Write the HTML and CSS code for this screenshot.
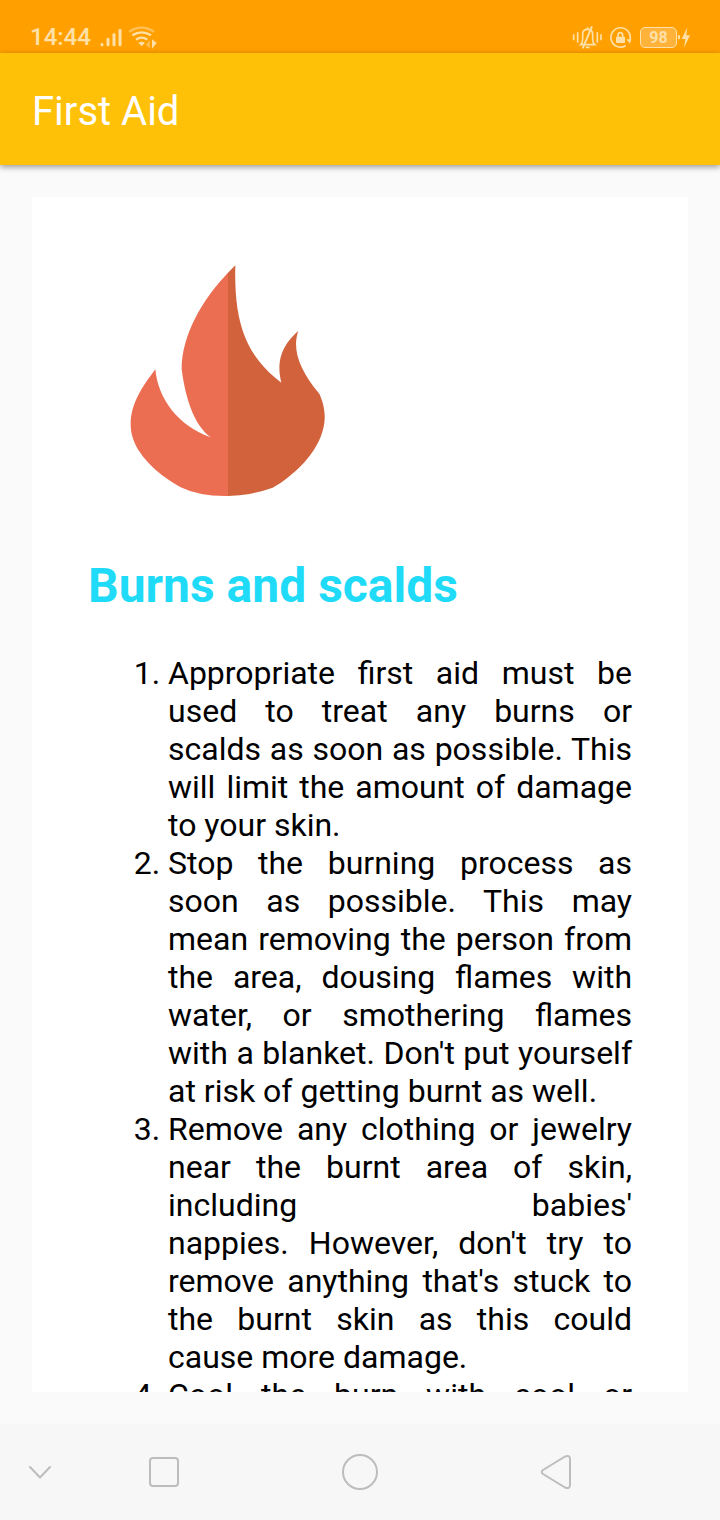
FILE: index.html
```html
<!DOCTYPE html>
<html lang="en">
<head>
<meta charset="utf-8">
<meta name="viewport" content="width=device-width, initial-scale=1">
<title>First Aid</title>
<link rel="stylesheet" href="styles.css">
</head>
<body>
<div class="status">
  <div class="status-group">
    <time class="clock">14:44</time>
    <svg class="signal" viewBox="240 36 66 56" aria-hidden="true">
      <g stroke="#ffe0a8" stroke-width="9" stroke-linecap="round"><path d="M246 85v1M264 69v17M282 55v31M300 42v44"/></g>
    </svg>
    <svg class="wifi" viewBox="324 24 87 72" aria-hidden="true">
      <g fill="none" stroke="#ffe0a8" stroke-width="7">
        <path d="M328 44q36-24 74 0" stroke="#ffc05a"/>
        <path d="M337 55q28-18 56 0M348 68q17-12 34 0"/>
      </g>
      <path d="M355 77q10-5 20 0l-10 11z" fill="#ffe0a8"/>
      <path d="M389 70v24l-11-11z" fill="#ffc05a"/>
      <path d="M396 67v28l14-17z" fill="#ffe0a8"/>
    </svg>
  </div>
  <div class="status-group">
    <svg class="bell" viewBox="39 24 93 75" aria-hidden="true">
      <g fill="none" stroke="#ffe0a8" stroke-width="5">
        <path d="M44 52v18M56 46v31M115 46v31M126 52v18M65 83q6-5 6-17V52q0-15 15-15t15 15v14q0 12 6 17z"/>
        <path d="M71 94L99 28" stroke-width="6"/>
        <path d="M80 91h12M86 37v-6"/>
      </g>
    </svg>
    <svg class="lock" viewBox="147 27 75 69" aria-hidden="true">
      <path d="M210 68A29 29 0 1 0 197 86" fill="none" stroke="#ffe0a8" stroke-width="5"/>
      <path d="M199 67h15l-4 13z" fill="#ffe0a8"/>
      <rect x="168" y="59" width="27" height="19" rx="2" fill="#ffe0a8"/>
      <path d="M174 60v-5q0-8 7-8t7 8v5" fill="none" stroke="#ffe0a8" stroke-width="5"/>
    </svg>
    <div class="power">
      <span class="battery">98</span>
      <svg class="bolt" viewBox="351 27 42 69" aria-hidden="true">
        <path d="M354 54h3q3 0 3 3v7q0 3-3 3h-3zM382 31l-17 35h11l-4 26 18-37h-11z" fill="#ffe0a8"/>
      </svg>
    </div>
  </div>
</div>
<header class="appbar"><h1 class="title">First Aid</h1></header>
<main class="page">
  <article class="card">
    <svg class="flame" viewBox="-66 -9 840 840" role="img" aria-label="Flame">
      <path fill="#ec6e52" d="M354 68V738H345Q265 738 212 712C120 660 62 592 62 524C62 460 98 409 136 358C144 447 205 528 302 562C253 526 226 446 215 357C215 256 276 149 354 68z"/>
      <path fill="#d1623c" d="M354 68L376 46C372 212 403 314 514 398C497 330 518 284 565 242C545 300 570 362 628 431C641 459 645 486 644 507C640 587 571 665 488 713Q425 736 354 738z"/>
    </svg>
    <h2 class="heading">Burns and scalds</h2>
    <ol class="steps">
      <li>Appropriate first aid must be used to treat any burns or scalds as soon as possible. This will limit the amount of damage to your skin.</li>
      <li>Stop the burning process as soon as possible. This may mean removing the person from the area, dousing flames with water, or smothering flames with a blanket. Don't put yourself at risk of getting burnt as well.</li>
      <li>Remove any clothing or jewelry near the burnt area of skin, including babies' nappies.&nbsp;However, don't try to remove anything that's stuck to the burnt skin as this could cause more damage.</li>
      <li class="step-open">Cool the burn with cool or</li>
    </ol>
  </article>
</main>
<nav class="navbar" aria-label="System">
  <button class="nav-hide" aria-label="Hide"><svg width="24" height="16" viewBox="0 0 24 16"><path d="M2 3l10 10.500L22 3"/></svg></button>
  <button class="nav-main" aria-label="Recent apps"><svg width="32" height="32" viewBox="0 0 32 32"><rect x="2" y="2" width="28" height="28" rx="3"/></svg></button>
  <button class="nav-main" aria-label="Home"><svg width="38" height="38" viewBox="0 0 38 38"><circle cx="19" cy="19" r="17"/></svg></button>
  <button class="nav-main" aria-label="Back"><svg width="32" height="38" viewBox="0 0 32 38"><path d="M3 17L25 3.500Q30 1.500 30 6V32Q30 36.500 25 34.500L3 21Q.5 19 3 17z"/></svg></button>
</nav>
</body>
</html>
```
FILE: styles.css
```css
* { box-sizing: border-box; }

body {
  margin: 0;
  height: 100vh;
  display: flex;
  flex-direction: column;
  background: #fafafa;
  font-family: Roboto, "Liberation Sans", sans-serif;
}

.status {
  flex: none;
  display: flex;
  justify-content: space-between;
  align-items: center;
  padding: 21px 29px 0 30px;
  height: 53px;
  background: #ffa000;
  color: #ffe0a8;
}

.status-group { display: flex; align-items: center; gap: 6px; }
.clock { padding: 1px 3px 0 0; font-size: 24px; line-height: 31px; font-weight: 500; }
.signal { width: 22px; height: 19px; }
.wifi { width: 29px; height: 24px; }
.bell { width: 31px; height: 25px; }
.lock { width: 25px; height: 23px; }
.power { display: flex; align-items: center; }

.battery {
  width: 37px;
  border: 1px solid #ffe0a8;
  border-radius: 5px;
  background: #ffb33a;
  font-size: 16px;
  line-height: 19px;
  font-weight: 700;
  text-align: center;
}

.bolt { width: 14px; height: 23px; }

.appbar {
  flex: none;
  display: flex;
  align-items: center;
  height: 112px;
  padding: 6px 32px 0;
  background: #ffc107;
  box-shadow: 0 2px 6px rgba(0, 0, 0, 0.4);
}

.title { margin: 0; color: #fff; font-size: 40px; line-height: 48px; font-weight: 400; }

.page { flex: 1; min-height: 0; display: flex; padding: 32px; }

.card {
  flex: 1;
  overflow: auto;
  scrollbar-width: none;
  padding: 50px 56px;
  background: #fff;
}

.flame { display: block; width: 280px; height: 280px; }
.heading { margin: 31px 0 40px; color: #1fdbf7; font-size: 48px; line-height: 56px; font-weight: 700; }

.steps {
  margin: 0;
  padding-left: 80px;
  color: #000;
  font-size: 32px;
  line-height: 38px;
  text-align: justify;
}

.step-open { text-align-last: justify; }

.navbar {
  flex: none;
  display: grid;
  grid-template-columns: 66px repeat(3, 1fr);
  align-items: center;
  height: 96px;
  padding-right: 66px;
  background: #f7f7f7;
}

.navbar button {
  display: flex;
  justify-content: center;
  align-items: center;
  height: 96px;
  padding: 0;
  border: 0;
  background: none;
}

.navbar .nav-hide { padding-left: 14px; }
.navbar svg { fill: none; stroke: #bdbdbd; stroke-width: 2; stroke-linecap: round; stroke-linejoin: round; }
```
